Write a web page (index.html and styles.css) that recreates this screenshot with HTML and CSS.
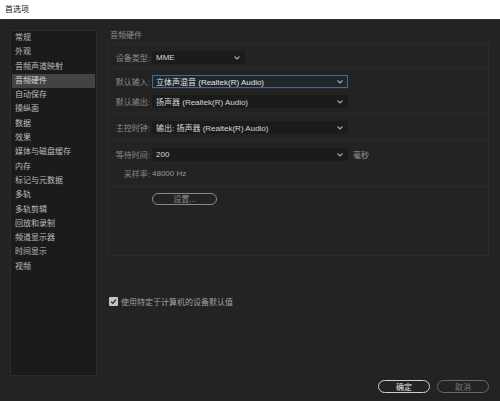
FILE: index.html
```html
<!DOCTYPE html>
<html lang="zh">
<head>
<meta charset="utf-8">
<title>首选项</title>
<link rel="stylesheet" href="styles.css">
</head>
<body>
<div class="titlebar">首选项</div>
<div class="main">
  <ul class="nav">
    <li>常规</li>
    <li>外观</li>
    <li>音频声道映射</li>
    <li class="active">音频硬件</li>
    <li>自动保存</li>
    <li>操纵面</li>
    <li>数据</li>
    <li>效果</li>
    <li>媒体与磁盘缓存</li>
    <li>内存</li>
    <li>标记与元数据</li>
    <li>多轨</li>
    <li>多轨剪辑</li>
    <li>回放和录制</li>
    <li>频道显示器</li>
    <li>时间显示</li>
    <li>视频</li>
  </ul>
  <div class="content">
    <div class="heading">音频硬件</div>
    <div class="box">
      <div class="group g1">
        <div class="row">
          <span class="label">设备类型:</span>
          <div class="select short"><span>MME</span><svg class="chev" viewBox="0 0 6 4"><polyline points="0.5,0.5 3,3 5.5,0.5"/></svg></div>
        </div>
      </div>
      <div class="group g2">
        <div class="row">
          <span class="label">默认输入:</span>
          <div class="select wide focus"><span>立体声混音 (Realtek(R) Audio)</span><svg class="chev" viewBox="0 0 6 4"><polyline points="0.5,0.5 3,3 5.5,0.5"/></svg></div>
        </div>
        <div class="row r2">
          <span class="label">默认输出:</span>
          <div class="select wide"><span>扬声器 (Realtek(R) Audio)</span><svg class="chev" viewBox="0 0 6 4"><polyline points="0.5,0.5 3,3 5.5,0.5"/></svg></div>
        </div>
      </div>
      <div class="group g3">
        <div class="row">
          <span class="label">主控时钟:</span>
          <div class="select wide"><span>输出: 扬声器 (Realtek(R) Audio)</span><svg class="chev" viewBox="0 0 6 4"><polyline points="0.5,0.5 3,3 5.5,0.5"/></svg></div>
        </div>
      </div>
      <div class="group g4">
        <div class="row">
          <span class="label">等待时间:</span>
          <div class="select wide"><span>200</span><svg class="chev" viewBox="0 0 6 4"><polyline points="0.5,0.5 3,3 5.5,0.5"/></svg></div>
          <span class="unit">毫秒</span>
        </div>
        <div class="row rate">
          <span class="label">采样率:</span>
          <span class="value">48000 Hz</span>
        </div>
      </div>
      <div class="group g5">
        <div class="row">
          <span class="label"></span>
          <div class="pill setup">设置...</div>
        </div>
      </div>
    </div>
    <div class="check-row">
      <span class="checkbox"><svg viewBox="0 0 9 9"><polyline points="2,4.6 3.8,6.4 7,2.6"/></svg></span>
      <span class="check-label">使用特定于计算机的设备默认值</span>
    </div>
  </div>
</div>
<div class="footer">
  <div class="pill ok">确定</div>
  <div class="pill cancel">取消</div>
</div>
</body>
</html>
```

FILE: styles.css
```css
* { box-sizing: border-box; }
html, body { margin: 0; padding: 0; }
body {
  width: 500px;
  height: 401px;
  background: #232323;
  font-family: "Liberation Sans", "Noto Sans CJK SC", sans-serif;
  font-size: 8px;
  color: #c4c4c4;
  display: flex;
  flex-direction: column;
  overflow: hidden;
}
.titlebar {
  height: 20px;
  background: #ffffff;
  color: #111;
  padding-left: 5px;
  line-height: 20px;
  border-bottom: 1px solid #2c2c2c;
  font-size: 8px;
  flex: none;
}
.main {
  height: 356px;
  flex: none;
  display: flex;
  padding-top: 10px;
}
.nav {
  list-style: none;
  margin: 0 0 0 10px;
  padding: 0 1px;
  width: 87px;
  height: 346px;
  background: #1b1b1b;
  border: 1px solid #2b2b2b;
  flex: none;
}
.nav li {
  height: 14.3px;
  line-height: 14.3px;
  padding-left: 3px;
  color: #bcbcbc;
  white-space: nowrap;
}
.nav li.active {
  background: #434343;
  color: #d8d8d8;
}
.content {
  margin-left: 10px;
  width: 382px;
  flex: none;
  display: flex;
  flex-direction: column;
}
.heading {
  height: 13px;
  line-height: 11px;
  padding-left: 3px;
  color: #8e8e8e;
}
.box {
  height: 213px;
  border: 1px solid #2b2b2b;
  display: flex;
  flex-direction: column;
}
.group {
  border-bottom: 1px solid #2b2b2b;
  display: flex;
  flex-direction: column;
}
.g1 { height: 25px; padding-top: 7px; }
.g2 { height: 45px; padding-top: 6px; }
.g2 .r2 { margin-top: 7px; }
.g3 { height: 27px; padding-top: 7px; }
.g4 { height: 46px; padding-top: 7px; }
.g4 .rate { margin-top: 5px; height: 14px; }
.g5 { flex: 1; border-bottom: none; padding-top: 5px; }
.row {
  display: flex;
  align-items: center;
  height: 13px;
}
.label {
  width: 42px;
  text-align: right;
  color: #8c8c8c;
  flex: none;
  margin-right: 2px;
  white-space: nowrap;
}
.select {
  height: 13px;
  background: #1b1b1b;
  color: #d6d6d6;
  display: flex;
  align-items: center;
  justify-content: space-between;
  padding: 0 4px 0 3px;
  border: 1px solid #1b1b1b;
}
.select.short { width: 93px; }
.select.wide { width: 196px; }
.select.focus {
  border-color: #3d6c9c;
  background: #22262b;
  box-shadow: 0 1px 0 #3a2520;
  color: #e4e4e4;
}
.chev {
  width: 6px;
  height: 4px;
  fill: none;
  stroke: #a8a8a8;
  stroke-width: 1.1;
}
.unit {
  margin-left: 5px;
  color: #9a9a9a;
}
.rate .label { color: #858585; }
.value { color: #9a9a9a; }
.pill {
  height: 13px;
  border-radius: 7px;
  display: flex;
  align-items: center;
  justify-content: center;
}
.setup {
  width: 65px;
  height: 12px;
  border: 1px solid #8a8a8a;
  color: #8e8e8e;
}
.check-row {
  margin-top: 40px;
  display: flex;
  align-items: center;
  height: 10px;
  padding-left: 2px;
}
.checkbox {
  width: 9px;
  height: 9px;
  background: #c4c4c4;
  border-radius: 1px;
  display: flex;
  margin-right: 3px;
}
.checkbox svg {
  width: 9px;
  height: 9px;
  fill: none;
  stroke: #222;
  stroke-width: 1.3;
}
.check-label { color: #a0a0a0; }
.footer {
  flex: 1;
  display: flex;
  justify-content: flex-end;
  align-items: flex-start;
  padding: 4px 11px 0 0;
  gap: 7px;
}
.footer .pill {
  width: 52px;
  height: 13px;
}
.ok {
  border: 1px solid #cfcfcf;
  color: #e6e6e6;
}
.cancel {
  border: 1px solid #6a6a6a;
  color: #777;
}
```
